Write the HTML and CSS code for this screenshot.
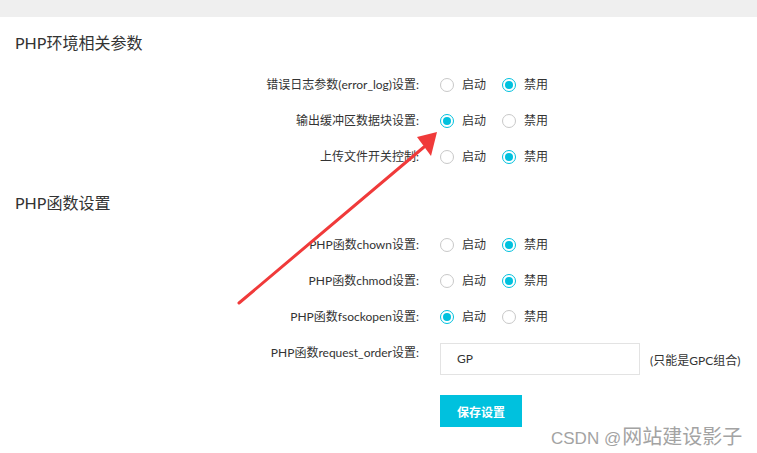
FILE: index.html
```html
<!DOCTYPE html>
<html lang="zh">
<head>
<meta charset="utf-8">
<link rel="stylesheet" href="styles.css">
</head>
<body>
<div class="topbar"></div>
<div class="content">
  <h2 class="section-title">PHP环境相关参数</h2>
  <div class="form">
    <div class="row">
      <div class="label">错误日志参数(error_log)设置:</div>
      <div class="field">
        <span class="radio"><i class="dot"></i>启动</span>
        <span class="radio"><i class="dot on"></i>禁用</span>
      </div>
    </div>
    <div class="row">
      <div class="label">输出缓冲区数据块设置:</div>
      <div class="field">
        <span class="radio"><i class="dot on"></i>启动</span>
        <span class="radio"><i class="dot"></i>禁用</span>
      </div>
    </div>
    <div class="row">
      <div class="label">上传文件开关控制:</div>
      <div class="field">
        <span class="radio"><i class="dot"></i>启动</span>
        <span class="radio"><i class="dot on"></i>禁用</span>
      </div>
    </div>
  </div>
  <h2 class="section-title second">PHP函数设置</h2>
  <div class="form">
    <div class="row">
      <div class="label">PHP函数chown设置:</div>
      <div class="field">
        <span class="radio"><i class="dot"></i>启动</span>
        <span class="radio"><i class="dot on"></i>禁用</span>
      </div>
    </div>
    <div class="row">
      <div class="label">PHP函数chmod设置:</div>
      <div class="field">
        <span class="radio"><i class="dot"></i>启动</span>
        <span class="radio"><i class="dot on"></i>禁用</span>
      </div>
    </div>
    <div class="row">
      <div class="label">PHP函数fsockopen设置:</div>
      <div class="field">
        <span class="radio"><i class="dot on"></i>启动</span>
        <span class="radio"><i class="dot"></i>禁用</span>
      </div>
    </div>
    <div class="row input-row">
      <div class="label">PHP函数request_order设置:</div>
      <div class="field">
        <div class="input">GP</div>
        <span class="hint">(只能是GPC组合)</span>
      </div>
    </div>
    <div class="row button-row">
      <div class="label"></div>
      <div class="field"><button class="btn">保存设置</button></div>
    </div>
  </div>
</div>
<div class="watermark"><span class="wm-latin">CSDN @</span><span class="wm-cjk">网站建设影子</span></div>
<svg class="arrow" width="757" height="453" viewBox="0 0 757 453">
  <line x1="239" y1="303" x2="424" y2="147" stroke="#f03a3a" stroke-width="3" stroke-linecap="round"/>
  <polygon points="437,132 417,137 431,156" fill="#f03a3a"/>
</svg>
</body>
</html>
```
FILE: styles.css
```css
* { box-sizing: border-box; }
html, body { margin: 0; padding: 0; background: #fff; }
body {
  font-family: "Lato", "Noto Sans CJK SC", sans-serif;
  font-size: 12px;
  color: #333;
  position: relative;
  width: 757px;
  height: 453px;
  overflow: hidden;
}
.topbar { height: 17px; background: #efefef; }
.content { padding: 14px 0 0 15px; }
.section-title {
  margin: 0;
  font-size: 16px;
  font-weight: normal;
  line-height: 24px;
  color: #333;
}
.section-title.second { margin-top: 16px; }
.form { margin-top: 12px; }
.row {
  display: flex;
  align-items: center;
  height: 36px;
}
.label {
  width: 407px;
  text-align: right;
  padding-right: 3px;
  color: #333;
  line-height: 16px;
}
.field {
  display: flex;
  align-items: center;
  margin-left: 18px;
}
.radio {
  display: inline-flex;
  align-items: center;
  margin-right: 16px;
  line-height: 16px;
}
.dot {
  width: 14px;
  height: 14px;
  border: 1px solid #c8c8c8;
  border-radius: 50%;
  margin-right: 8px;
  position: relative;
  background: #fff;
}
.dot.on { border-color: #00c1de; }
.dot.on::after {
  content: "";
  position: absolute;
  left: 2px; top: 2px;
  width: 8px; height: 8px;
  border-radius: 50%;
  background: #00c1de;
}
.input-row {
  height: 32px;
  margin-top: 8px;
  align-items: flex-start;
}
.input-row .label { padding-top: 2px; }
.input {
  width: 200px;
  height: 32px;
  border: 1px solid #e3e3e3;
  padding-left: 16px;
  line-height: 30px;
  color: #333;
}
.hint { margin-left: 10px; color: #333; }
.button-row { height: 32px; margin-top: 20px; }
.btn {
  width: 82px;
  height: 32px;
  border: 0;
  background: #00c1de;
  color: #fff;
  font-family: "Noto Sans CJK SC", sans-serif;
  font-size: 12px;
  font-weight: bold;
  padding: 0;
}
.watermark {
  position: absolute;
  left: 551px;
  top: 423px;
  color: #a3a3a3;
  white-space: nowrap;
  line-height: 26px;
}
.wm-latin {
  font-family: "Liberation Sans", sans-serif;
  font-size: 17px;
}
.wm-cjk {
  font-family: "Noto Sans CJK SC", sans-serif;
  font-size: 20px;
  margin-left: 1px;
}
.arrow { position: absolute; left: 0; top: 0; pointer-events: none; }
```
